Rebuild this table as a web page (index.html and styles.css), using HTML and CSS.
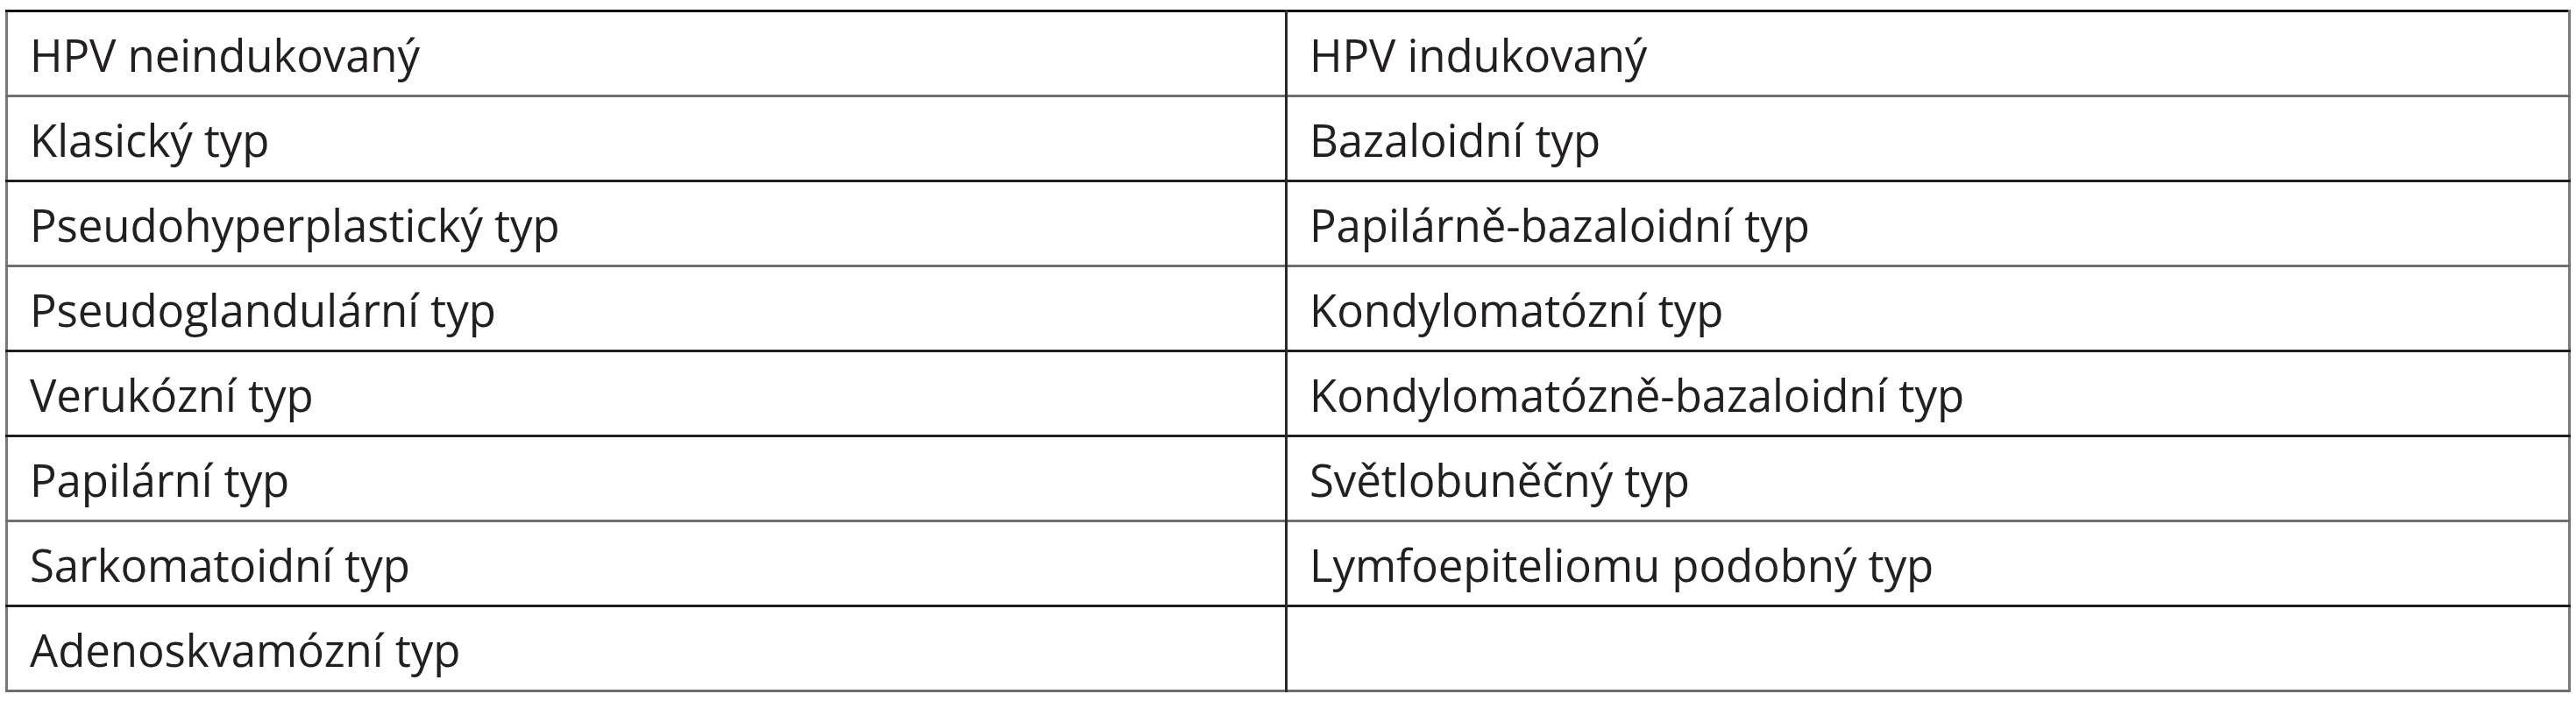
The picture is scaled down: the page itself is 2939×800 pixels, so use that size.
FILE: index.html
```html
<!DOCTYPE html>
<html lang="cs">
<head>
<meta charset="utf-8">
<link rel="stylesheet" href="styles.css">
</head>
<body>
<table class="types">
  <colgroup>
    <col class="col-left">
    <col class="col-right">
  </colgroup>
  <tbody>
    <tr class="row gray"><td class="c left">HPV neindukovaný</td><td class="c right">HPV indukovaný</td></tr>
    <tr class="row dark"><td class="c left">Klasický typ</td><td class="c right">Bazaloidní typ</td></tr>
    <tr class="row gray"><td class="c left">Pseudohyperplastický typ</td><td class="c right">Papilárně-bazaloidní typ</td></tr>
    <tr class="row dark"><td class="c left">Pseudoglandulární typ</td><td class="c right">Kondylomatózní typ</td></tr>
    <tr class="row dark"><td class="c left">Verukózní typ</td><td class="c right">Kondylomatózně-bazaloidní typ</td></tr>
    <tr class="row gray"><td class="c left">Papilární typ</td><td class="c right">Světlobuněčný typ</td></tr>
    <tr class="row dark"><td class="c left">Sarkomatoidní typ</td><td class="c right">Lymfoepiteliomu podobný typ</td></tr>
    <tr class="row gray"><td class="c left">Adenoskvamózní typ</td><td class="c right"></td></tr>
  </tbody>
</table>
</body>
</html>
```
FILE: styles.css
```css
html, body {
  margin: 0;
  padding: 0;
  background: #ffffff;
}

body {
  padding: 11px 0 0 6px;
}

.types {
  width: 2924px;
  border-collapse: collapse;
  table-layout: fixed;
  font-family: "Open Sans", "Liberation Sans", sans-serif;
  font-size: 51px;
  color: #231f20;
  border-top: 3px solid #111111;
  border-left: 3px solid #7a7a7a;
  border-right: 3px solid #7a7a7a;
}

.col-left {
  width: 1460px;
}

.col-right {
  width: 1464px;
}

.row {
  height: 97px;
}

.row.gray {
  border-bottom: 3px solid #6f6f6f;
}

.row.dark {
  border-bottom: 3px solid #1e1e1e;
}

.c {
  padding: 2px 0 0 25px;
  vertical-align: middle;
  white-space: nowrap;
  letter-spacing: -0.1px;
}

.left {
  border-right: 3px solid #2a2a2a;
}
```
